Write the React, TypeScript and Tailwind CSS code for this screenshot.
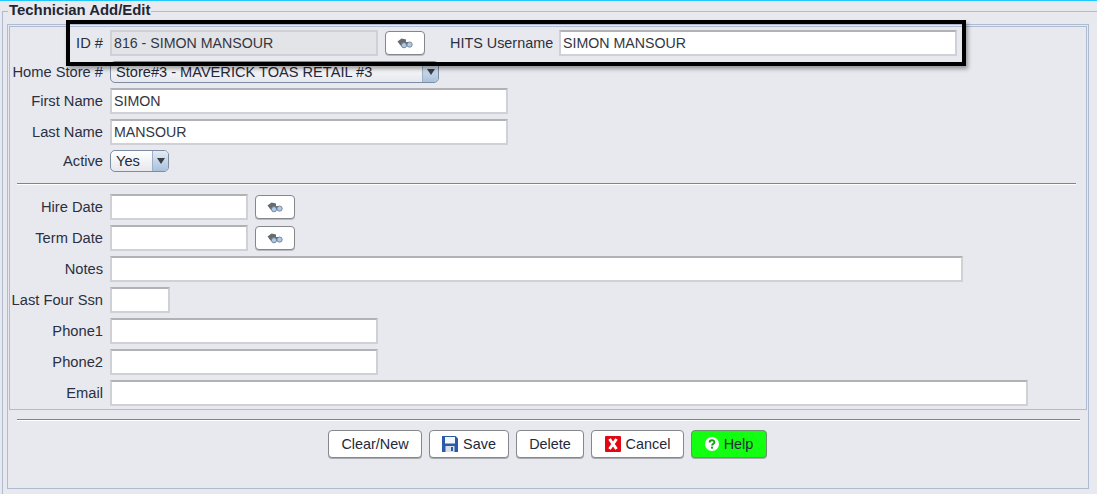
const fieldText = 'text-[14.2px] leading-none text-[#33363f]';
const labelText = 'text-[14.7px] leading-none text-[#2b3040]';

function BinocularsIcon() {
  return (
    <svg width="16" height="11" viewBox="0 0 16 11">
      <path d="M0.5 3.5 L4.5 0.5 L9 1.5 L9 4 L12 4 L8 8 L3.5 7.5 Z" fill="#666b70" />
      <circle cx="7" cy="7.2" r="2.6" fill="#a9cbee" stroke="#6d7277" strokeWidth="0.8" />
      <circle cx="12.6" cy="6.6" r="2.6" fill="#a9cbee" stroke="#6d7277" strokeWidth="0.8" />
    </svg>
  );
}

function SaveIcon() {
  return (
    <svg width="16" height="16" viewBox="0 0 16 16">
      <path d="M0 0 H13.5 L16 2.5 V16 H0 Z" fill="#2a5aa8" />
      <rect x="3" y="1" width="10" height="6.5" fill="#f2f5fa" />
      <rect x="3.5" y="10" width="9" height="6" fill="#d9dfe9" />
      <rect x="9" y="11" width="2" height="4" fill="#2a5aa8" />
    </svg>
  );
}

function CancelIcon() {
  return (
    <svg width="16" height="16" viewBox="0 0 16 16">
      <rect width="16" height="16" rx="1" fill="#e30613" />
      <path d="M4.5 3 L11.5 13 M11.5 3 L4.5 13" stroke="#fff" strokeWidth="3" />
    </svg>
  );
}

function HelpIcon() {
  return (
    <svg width="14" height="14" viewBox="0 0 14 14">
      <circle cx="7" cy="7" r="7" fill="#fff" />
      <path d="M4.6 5.4 C4.6 2.6 9.4 2.6 9.4 5.2 C9.4 7 7 6.8 7 8.6" fill="none" stroke="#12a012" strokeWidth="1.9" />
      <rect x="6" y="9.6" width="2" height="2" fill="#12a012" />
    </svg>
  );
}

function Input({ value = '', width, disabled }: { value?: string; width: string; disabled?: boolean }) {
  return (
    <div
      className={`${width} h-[26px] shrink-0 flex items-center pl-[2px] border-2 border-[#d0d1d6] border-t-[#b1b2b6] ${fieldText} ${
        disabled ? 'bg-[#e3e4e8] border-[#cfd0d4] border-t-[#cfd0d4]' : 'bg-white'
      }`}
    >
      {value}
    </div>
  );
}

function Select({ value, width }: { value: string; width: string }) {
  return (
    <div className={`${width} h-[22px] shrink-0 flex rounded-[5px] border border-[#7d8ca3] bg-gradient-to-b from-white to-[#e6e8ee] overflow-hidden`}>
      <div className="flex-1 pl-[5px] flex items-center text-[14.6px] leading-none text-[#23283a] whitespace-nowrap">{value}</div>
      <div className="w-[16px] flex items-center justify-center border-l border-[#9fb0c6] bg-gradient-to-b from-[#e4ebf3] to-[#a9c1dc]">
        <span className="w-0 h-0 border-x-[4px] border-x-transparent border-t-[6px] border-t-[#3a3f48]" />
      </div>
    </div>
  );
}

function LookupButton() {
  return (
    <button className="w-[40px] h-[24px] shrink-0 flex items-center justify-center rounded-[4px] border border-[#85878c] bg-white shadow-[0_1px_0_#b9bac0]">
      <BinocularsIcon />
    </button>
  );
}

function ActionButton({ children, width, green }: { children: React.ReactNode; width: string; green?: boolean }) {
  return (
    <button
      className={`${width} h-[28px] flex items-center justify-center gap-[5px] rounded-[4px] border text-[14.4px] leading-none text-[#23283a] shadow-[0_1px_0_#a9abb0] ${
        green ? 'bg-[#12ff12] border-[#6f8f6f]' : 'bg-white border-[#85878c]'
      }`}
    >
      {children}
    </button>
  );
}

function Row({ label, children, className = '' }: { label: string; children: React.ReactNode; className?: string }) {
  return (
    <div className={`flex items-center gap-[7px] ${className}`}>
      <span className={`w-[93px] shrink-0 text-right whitespace-nowrap ${labelText}`}>{label}</span>
      {children}
    </div>
  );
}

function Divider({ className }: { className: string }) {
  return <div className={`h-[2px] border-t border-t-[#808389] border-b border-b-white ${className}`} />;
}

export default function App() {
  return (
    <div
      className="relative h-[494px] w-[1097px] overflow-hidden bg-[#e8e9ef] border-t border-[#1fc8ff]"
      style={{ fontFamily: '"Liberation Sans", Arial, sans-serif' }}
    >
      <fieldset className="ml-[2px] h-[493px] border-t border-l border-[#aebbd0]">
        <legend className="ml-[5px] px-[1px] h-[20px] text-[14.9px] leading-[18px] font-bold text-[#222633]">Technician Add/Edit</legend>

        {/* Outer panel */}
        <div className="ml-[4px] mt-[3px] w-[1082px] h-[465px] border border-[#aebbd0] p-[1px]">
          {/* Form panel */}
          <div className="h-[384px] w-[1078px] border border-[#aebbd0] pt-[3px] flex flex-col">
            <Row label="ID #">
              <Input value="816 - SIMON MANSOUR" width="w-[268px]" disabled />
              <LookupButton />
              <span className="ml-[18px] w-[102px] whitespace-nowrap text-[14.4px] leading-none text-[#2b3040]">HITS Username</span>
              <Input value="SIMON MANSOUR" width="w-[398px]" />
            </Row>
            <Row label="Home Store #" className="mt-[5px]">
              <Select value="Store#3 - MAVERICK TOAS RETAIL #3" width="w-[329px]" />
            </Row>
            <Row label="First Name" className="mt-[5px]">
              <Input value="SIMON" width="w-[398px]" />
            </Row>
            <Row label="Last Name" className="mt-[5px]">
              <Input value="MANSOUR" width="w-[398px]" />
            </Row>
            <Row label="Active" className="mt-[5px]">
              <Select value="Yes" width="w-[59px]" />
            </Row>
            <Divider className="ml-[7px] mt-[11px] mb-[9px] w-[1059px]" />
            <Row label="Hire Date">
              <Input width="w-[138px]" />
              <LookupButton />
            </Row>
            <Row label="Term Date" className="mt-[5px]">
              <Input width="w-[138px]" />
              <LookupButton />
            </Row>
            <Row label="Notes" className="mt-[5px]">
              <Input width="w-[853px]" />
            </Row>
            <Row label="Last Four Ssn" className="mt-[5px]">
              <Input width="w-[60px]" />
            </Row>
            <Row label="Phone1" className="mt-[5px]">
              <Input width="w-[268px]" />
            </Row>
            <Row label="Phone2" className="mt-[5px]">
              <Input width="w-[268px]" />
            </Row>
            <Row label="Email" className="mt-[5px]">
              <Input width="w-[918px]" />
            </Row>
          </div>

          <Divider className="ml-[8px] mt-[9px] w-[1063px]" />

          <div className="mt-[9px] ml-[319px] flex gap-[7px]">
            <ActionButton width="w-[94px]">Clear/New</ActionButton>
            <ActionButton width="w-[80px]">
              <SaveIcon />
              Save
            </ActionButton>
            <ActionButton width="w-[68px]">Delete</ActionButton>
            <ActionButton width="w-[93px]">
              <CancelIcon />
              Cancel
            </ActionButton>
            <ActionButton width="w-[76px]" green>
              <HelpIcon />
              Help
            </ActionButton>
          </div>
        </div>
      </fieldset>

      {/* Black highlight drawn over the top row */}
      <div className="absolute left-[66px] top-[19px] w-[900px] h-[46px] border-[4px] border-black shadow-[2px_3px_4px_rgba(0,0,0,0.35)] pointer-events-none" />
    </div>
  );
}
